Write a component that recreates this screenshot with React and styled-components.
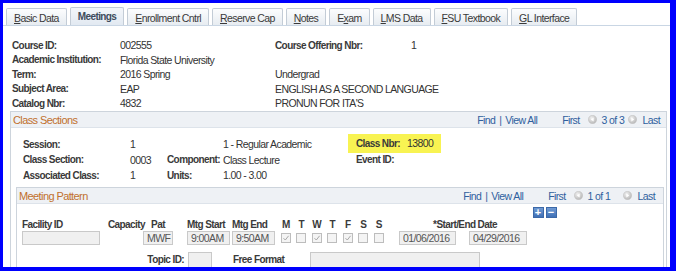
import React from "react";
import { styled, createGlobalStyle } from "styled-components";

const GlobalStyle = createGlobalStyle`
  body {
    margin: 0;
    font-family: "Liberation Sans", Arial, sans-serif;
  }
`;

const tabs = [
  { pre: "", key: "B", rest: "asic Data" },
  { pre: "", key: "", rest: "Meetings", active: true },
  { pre: "", key: "E", rest: "nrollment Cntrl" },
  { pre: "", key: "R", rest: "eserve Cap" },
  { pre: "", key: "N", rest: "otes" },
  { pre: "E", key: "x", rest: "am" },
  { pre: "", key: "L", rest: "MS Data" },
  { pre: "", key: "F", rest: "SU Textbook" },
  { pre: "", key: "G", rest: "L Interface" },
];

const days = [
  { d: "M", on: true },
  { d: "T" },
  { d: "W", on: true },
  { d: "T" },
  { d: "F", on: true },
  { d: "S" },
  { d: "S" },
];

function Arrow({ dir }) {
  const pts = dir === "left" ? "5.6,2.6 5.6,6.4 2.8,4.5" : "3.4,2.6 3.4,6.4 6.2,4.5";
  return (
    <ArrowIcon width="9" height="9" viewBox="0 0 9 9">
      <defs>
        <radialGradient id={`g-${dir}`} cx="40%" cy="35%" r="70%">
          <stop offset="0" stopColor="#f2f2f2" />
          <stop offset="1" stopColor="#b4b4b4" />
        </radialGradient>
      </defs>
      <circle cx="4.5" cy="4.5" r="4.2" fill={`url(#g-${dir})`} stroke="#c4c4c4" strokeWidth="0.5" />
      <polygon points={pts} fill="#fff" />
    </ArrowIcon>
  );
}

function Nav({ count, countW }) {
  return (
    <NavBar>
      <span>Find</span>
      <Sep>|</Sep>
      <span>View All</span>
      <First>First</First>
      <Arrow dir="left" />
      <Count $w={countW}>{count}</Count>
      <Arrow dir="right" />
      <Last>Last</Last>
    </NavBar>
  );
}

function Check({ on }) {
  return (
    <Box>
      {on && (
        <svg width="8" height="8" viewBox="0 0 8 8">
          <polyline points="1.5,4.2 3.3,6 6.6,1.8" fill="none" stroke="#a8a8a8" strokeWidth="1" />
        </svg>
      )}
    </Box>
  );
}

export default function App() {
  return (
    <>
      <GlobalStyle />
      <Frame>
        <TabBar>
          {tabs.map((t, i) => (
            <Tab key={i} $active={t.active}>
              {t.pre}
              {t.key && <u>{t.key}</u>}
              {t.rest}
            </Tab>
          ))}
        </TabBar>

        <HeaderGrid>
          <Label>Course ID:</Label>
          <Value>002555</Value>
          <Label>Course Offering Nbr:</Label>
          <Value>1</Value>

          <Label>Academic Institution:</Label>
          <Value $span={3}>Florida State University</Value>

          <Label>Term:</Label>
          <Value>2016 Spring</Value>
          <Value $span={2}>Undergrad</Value>

          <Label>Subject Area:</Label>
          <Value>EAP</Value>
          <Value $span={2}>ENGLISH AS A SECOND LANGUAGE</Value>

          <Label>Catalog Nbr:</Label>
          <Value>4832</Value>
          <Value $span={2}>PRONUN FOR ITA'S</Value>
        </HeaderGrid>

        <Panel $margin="1px 3px 0 7px">
          <Band $pr={6}>
            <Title>Class Sections</Title>
            <Nav count="3 of 3" countW={31} />
          </Band>

          <SessionGrid>
            <Label>Session:</Label>
            <Value>1</Value>
            <span />
            <Value>1 - Regular Academic</Value>
            <Highlight>
              <NbrLabel>Class Nbr:</NbrLabel>
              <Value>13800</Value>
            </Highlight>

            <Label>Class Section:</Label>
            <Value>0003</Value>
            <Label>Component:</Label>
            <Value>Class Lecture</Value>
            <EventLabel>Event ID:</EventLabel>

            <Label>Associated Class:</Label>
            <Value>1</Value>
            <Label>Units:</Label>
            <Value>1.00 - 3.00</Value>
            <span />
          </SessionGrid>

          <Panel $margin="4px 2px 0 5px">
            <Band $pr={8}>
              <Title>Meeting Pattern</Title>
              <Nav count="1 of 1" countW={40} />
            </Band>

            <MeetGrid>
              <RowButtons>
                <SqButton>+</SqButton>
                <SqButton>−</SqButton>
              </RowButtons>

              <ColHead $col="1">Facility ID</ColHead>
              <ColHead $col="2">Capacity</ColHead>
              <ColHead $col="3" $w={30} $center>Pat</ColHead>
              <ColHead $col="4">Mtg Start</ColHead>
              <ColHead $col="5">Mtg End</ColHead>
              {days.map((d, i) => (
                <ColHead key={i} $col={`${6 + i}`} $center>
                  {d.d}
                </ColHead>
              ))}
              <ColHead $col="14 / 16" $center $pl={4}>
                *Start/End Date
              </ColHead>

              <Field $col="1" $w={78} readOnly value="" />
              <Field $col="3" $w={30} readOnly value="MWF" />
              <Field $col="4" $w={43} readOnly value="9:00AM" />
              <Field $col="5" $w={43} readOnly value="9:50AM" />
              {days.map((d, i) => (
                <CheckCell key={i} $col={6 + i}>
                  <Check on={d.on} />
                </CheckCell>
              ))}
              <Field $col="14" $w={57} $ml={1.5} readOnly value="01/06/2016" />
              <Field $col="15" $w={58} $ml={0.5} readOnly value="04/29/2016" />

              <TopicLabel>Topic ID:</TopicLabel>
              <Field $col="4" $w={24} $ml={1} $h={16} $top readOnly value="" />
              <TopicText>Free Format</TopicText>
              <Field $col="8 / 16" $w={170} $ml={1} $h={16} $top readOnly value="" />
            </MeetGrid>
          </Panel>
        </Panel>
      </Frame>
    </>
  );
}

const Frame = styled.div`
  width: 676px;
  height: 271px;
  box-sizing: border-box;
  border-style: solid;
  border-color: #0000fe;
  border-width: 3px 6px 4px 3px;
  background: #fff;
  overflow: hidden;
  font-size: 10.5px;
  letter-spacing: -0.6px;
  color: #333;
`;

const TabBar = styled.div`
  display: flex;
  align-items: flex-end;
  gap: 3px;
  height: 16px;
  padding: 6px 0 0 3px;
  border-bottom: 1px solid #c9d6e4;
`;

const Tab = styled.div`
  height: ${(p) => (p.$active ? 17 : 15)}px;
  display: flex;
  align-items: center;
  padding: 0 7px;
  padding-top: ${(p) => (p.$active ? 0 : 1)}px;
  border: 1px solid #c3ccd6;
  border-bottom: none;
  border-radius: 2px 2px 0 0;
  background: ${(p) =>
    p.$active
      ? "linear-gradient(#f3f6fa, #e2e9f1)"
      : "linear-gradient(#fcfdfe, #e7ecf1)"};
  font-weight: ${(p) => (p.$active ? "bold" : "normal")};
  font-size: ${(p) => (p.$active ? 10 : 10.5)}px;
  color: ${(p) => (p.$active ? "#3d4b5c" : "#3a3a3a")};
  white-space: nowrap;

  u {
    text-decoration-thickness: 1px;
    text-underline-offset: 1px;
  }
`;

const HeaderGrid = styled.div`
  display: grid;
  grid-template-columns: 108px 155px 136px 1fr;
  grid-auto-rows: 14.5px;
  align-items: center;
  padding: 11.75px 0 0 9px;
`;

const Label = styled.span`
  font-weight: bold;
  font-size: 10px;
  letter-spacing: -0.6px;
  color: #3a3a3a;
  white-space: nowrap;
`;

const Value = styled.span`
  color: #333;
  white-space: nowrap;
  grid-column: ${(p) => (p.$span ? `span ${p.$span}` : "auto")};
`;

const Panel = styled.div`
  margin: ${(p) => p.$margin};
  border: 1px solid #cdd4dc;
`;

const Band = styled.div`
  display: flex;
  align-items: center;
  height: 15px;
  padding: 0 ${(p) => p.$pr}px 0 2px;
  background: #eef1f5;
  border-bottom: 1px solid #dde3ea;
`;

const Title = styled.span`
  font-size: 11px;
  color: #c1702d;
`;

const NavBar = styled.div`
  margin-left: auto;
  display: flex;
  align-items: center;
  color: #2f5f9e;
  white-space: nowrap;
`;

const Sep = styled.span`
  margin: 0 4px;
`;

const First = styled.span`
  margin-left: 25px;
  margin-right: 8px;
`;

const Last = styled.span`
  margin-left: 6px;
`;

const Count = styled.span`
  width: ${(p) => p.$w}px;
  padding-left: 5px;
  box-sizing: border-box;
`;

const ArrowIcon = styled.svg`
  display: block;
`;

const SessionGrid = styled.div`
  display: grid;
  grid-template-columns: 107px 37px 56px 125px 93px;
  grid-auto-rows: 15.5px;
  align-items: center;
  padding: 8.25px 0 0 12px;
`;

const Highlight = styled.div`
  align-self: stretch;
  margin: -3px 0 -1px;
  display: flex;
  align-items: center;
  padding-left: 8px;
  background: #f8f352;
`;

const NbrLabel = styled(Label)`
  width: 51px;
`;

const EventLabel = styled(Label)`
  padding-left: 8px;
`;

const MeetGrid = styled.div`
  display: grid;
  grid-template-columns: 86px 35px 44px 45px 46px repeat(7, 15.5px) 11px 71px 60px 40px;
  grid-template-rows: 11px 13px 14px auto;
  padding: 3px 0 0 5px;
  align-items: center;
`;

const RowButtons = styled.div`
  grid-column: 16;
  grid-row: 1;
  display: flex;
  gap: 2px;
  margin-left: 4px;
`;

const SqButton = styled.div`
  width: 11px;
  height: 11px;
  box-sizing: border-box;
  display: flex;
  align-items: center;
  justify-content: center;
  border: 1px solid #3b68a8;
  background: linear-gradient(#6f9ad3, #3f70b6);
  color: #fff;
  font-weight: bold;
  font-size: 11px;
  line-height: 1;
  letter-spacing: 0;
`;

const ColHead = styled(Label)`
  grid-row: 2;
  grid-column: ${(p) => p.$col};
  text-align: ${(p) => (p.$center ? "center" : "left")};
  width: ${(p) => (p.$w ? `${p.$w}px` : "auto")};
  padding-left: ${(p) => p.$pl || 0}px;
`;

const Field = styled.input`
  grid-column: ${(p) => p.$col};
  grid-row: ${(p) => (p.$top ? 4 : 3)};
  align-self: ${(p) => (p.$top ? "start" : "stretch")};
  margin-top: ${(p) => (p.$top ? 7 : 0)}px;
  margin-left: ${(p) => p.$ml || 0}px;
  width: ${(p) => p.$w}px;
  height: ${(p) => p.$h || 14}px;
  box-sizing: border-box;
  border: 1px solid #c9c9c9;
  background: #f0f0f0;
  color: #555;
  padding: 0 0 0 3px;
  font: inherit;
  letter-spacing: inherit;
  outline: none;
`;

const CheckCell = styled.div`
  grid-row: 3;
  grid-column: ${(p) => p.$col};
  display: flex;
  justify-content: center;
`;

const Box = styled.div`
  width: 10px;
  height: 10px;
  box-sizing: border-box;
  border: 1px solid #bdbdbd;
  background: #f4f4f4;
  display: flex;
  align-items: center;
  justify-content: center;
`;

const TopicLabel = styled(Label)`
  grid-row: 4;
  grid-column: 2 / 4;
  align-self: start;
  margin-top: 9px;
  text-align: right;
  padding-right: 3px;
`;

const TopicText = styled(Label)`
  grid-row: 4;
  grid-column: 5 / 7;
  align-self: start;
  margin-top: 9px;
  padding-left: 1px;
`;
